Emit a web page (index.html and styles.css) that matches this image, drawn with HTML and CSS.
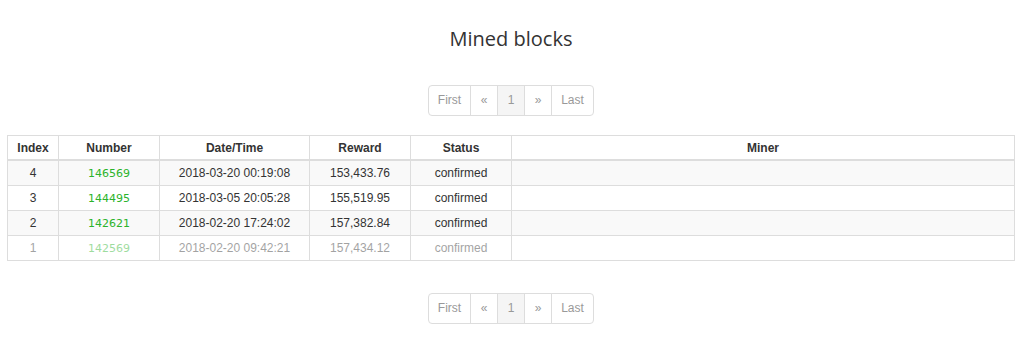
FILE: index.html
```html
<!DOCTYPE html>
<html lang="en">
<head>
    <meta charset="UTF-8">
    <title>Mined blocks</title>
    <link rel="stylesheet" href="styles.css">
</head>
<body>
    <div class="page">
        <h2 class="title">Mined blocks</h2>

        <ul class="pager">
            <li class="wide"><a href="#">First</a></li>
            <li><a href="#">&laquo;</a></li>
            <li class="active"><a href="#">1</a></li>
            <li><a href="#">&raquo;</a></li>
            <li class="wide"><a href="#">Last</a></li>
        </ul>

        <table class="blocks">
            <thead>
                <tr>
                    <th class="c-index">Index</th>
                    <th class="c-number">Number</th>
                    <th class="c-date">Date/Time</th>
                    <th class="c-reward">Reward</th>
                    <th class="c-status">Status</th>
                    <th>Miner</th>
                </tr>
            </thead>
            <tbody>
                <tr>
                    <td>4</td>
                    <td><a class="num" href="#">146569</a></td>
                    <td>2018-03-20 00:19:08</td>
                    <td>153,433.76</td>
                    <td>confirmed</td>
                    <td></td>
                </tr>
                <tr>
                    <td>3</td>
                    <td><a class="num" href="#">144495</a></td>
                    <td>2018-03-05 20:05:28</td>
                    <td>155,519.95</td>
                    <td>confirmed</td>
                    <td></td>
                </tr>
                <tr>
                    <td>2</td>
                    <td><a class="num" href="#">142621</a></td>
                    <td>2018-02-20 17:24:02</td>
                    <td>157,382.84</td>
                    <td>confirmed</td>
                    <td></td>
                </tr>
                <tr class="fading">
                    <td>1</td>
                    <td><a class="num" href="#">142569</a></td>
                    <td>2018-02-20 09:42:21</td>
                    <td>157,434.12</td>
                    <td>confirmed</td>
                    <td></td>
                </tr>
            </tbody>
        </table>

        <ul class="pager">
            <li class="wide"><a href="#">First</a></li>
            <li><a href="#">&laquo;</a></li>
            <li class="active"><a href="#">1</a></li>
            <li><a href="#">&raquo;</a></li>
            <li class="wide"><a href="#">Last</a></li>
        </ul>
    </div>
</body>
</html>
```

FILE: styles.css
```css
body {
    margin: 0;
    background: #fff;
    font-family: "Liberation Sans", Arial, sans-serif;
    font-size: 12px;
    color: #333;
}
.page {
    padding: 0 9px 0 7px;
}
.title {
    margin: 25px 0 0;
    height: 28px;
    text-align: center;
    font-family: "Open Sans", "DejaVu Sans", sans-serif;
    font-weight: 400;
    font-size: 20px;
    line-height: 28px;
    color: #333;
}
.pager {
    display: flex;
    justify-content: center;
    list-style: none;
    margin: 32px 0 19px;
    padding: 0;
}
.pager li a {
    display: block;
    box-sizing: border-box;
    width: 28px;
    height: 31px;
    line-height: 29px;
    border: 1px solid #ddd;
    margin-left: -1px;
    color: #999;
    text-align: center;
    text-decoration: none;
    font-size: 12px;
    background: #fff;
}
.pager li.wide a {
    width: 43px;
}
.pager li:first-child a {
    border-radius: 4px 0 0 4px;
    margin-left: 0;
}
.pager li:last-child a {
    border-radius: 0 4px 4px 0;
}
.pager li.active a {
    background: #f5f5f5;
}
.blocks + .pager {
    margin-top: 32px;
}
.blocks {
    width: 100%;
    border-collapse: collapse;
    border: 1px solid #ddd;
}
.blocks th,
.blocks td {
    border: 1px solid #ddd;
    text-align: center;
    padding: 0 5px;
    height: 24px;
}
.blocks th {
    font-weight: bold;
    height: 23px;
    border-bottom: 2px solid #ddd;
}
.blocks tbody tr:nth-child(odd) {
    background: #f9f9f9;
}
.c-index { width: 40px; }
.c-number { width: 90px; }
.c-date { width: 139px; }
.c-reward { width: 90px; }
.c-status { width: 90px; }
.num {
    font-family: "DejaVu Sans", sans-serif;
    font-size: 11px;
    color: #2bb32b;
    text-decoration: none;
}
.fading td {
    opacity: 0.45;
}
```
